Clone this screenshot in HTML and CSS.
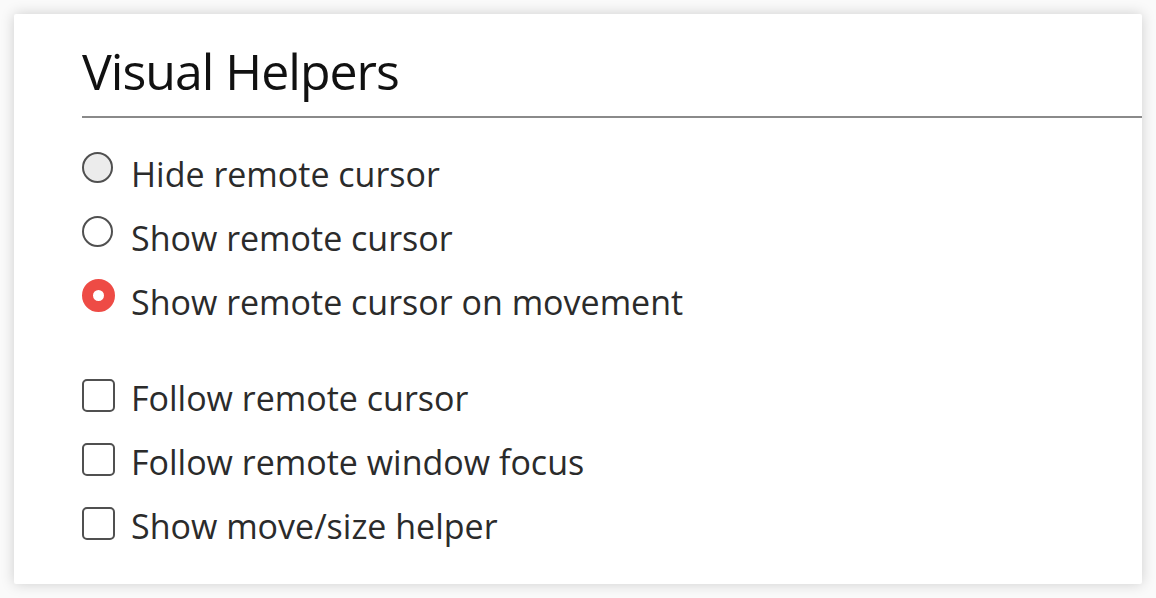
FILE: index.html
```html
<!DOCTYPE html>
<html lang="en">
<head>
  <meta charset="UTF-8">
  <meta name="viewport" content="width=device-width, initial-scale=1.0">
  <title>Visual Helpers</title>
  <link rel="stylesheet" href="styles.css">
</head>
<body>
  <div class="panel">
    <h2 class="panel-title">Visual Helpers</h2>

    <div class="option-group">
      <label class="option">
        <input type="radio" name="cursor" class="radio hover">
        <span>Hide remote cursor</span>
      </label>
      <label class="option">
        <input type="radio" name="cursor" class="radio">
        <span>Show remote cursor</span>
      </label>
      <label class="option">
        <input type="radio" name="cursor" class="radio" checked>
        <span>Show remote cursor on movement</span>
      </label>
    </div>

    <div class="option-group">
      <label class="option">
        <input type="checkbox" class="check">
        <span>Follow remote cursor</span>
      </label>
      <label class="option">
        <input type="checkbox" class="check">
        <span>Follow remote window focus</span>
      </label>
      <label class="option">
        <input type="checkbox" class="check">
        <span>Show move/size helper</span>
      </label>
    </div>
  </div>
</body>
</html>
```

FILE: styles.css
```css
body {
  margin: 0;
  background: #fafafa;
  font-family: "Open Sans", "Noto Sans", sans-serif;
}

.panel {
  margin: 14px;
  width: 1060px;
  height: 546px;
  padding: 24px 0 0 68px;
  background: #fff;
  border-radius: 2px;
  box-shadow: 0 0 14px rgba(0, 0, 0, 0.18);
}

.panel-title {
  margin: 0;
  padding: 1px 0 13px;
  font-size: 50px;
  font-weight: normal;
  letter-spacing: -1px;
  line-height: 64px;
  color: #111;
  border-bottom: 2px solid #8a8a8a;
}

.option-group {
  display: flex;
  flex-direction: column;
}

.option-group:first-of-type {
  margin-top: 24px;
}

.option-group + .option-group {
  margin-top: 32px;
}

.option {
  display: flex;
  align-items: center;
  height: 64px;
  font-size: 34px;
  color: #2b2b2b;
}

.radio,
.check {
  appearance: none;
  margin: 0 18px 13px 0;
  background: #fff;
  border: 2px solid #505050;
}

.radio {
  width: 31px;
  height: 31px;
  border-radius: 50%;
}

.radio.hover {
  background: #ececec;
}

.radio:checked {
  width: 33px;
  height: 33px;
  margin-right: 16px;
  border: 11px solid #ee4b45;
}

.check {
  width: 33px;
  height: 33px;
  margin: 0 16px 6px 0;
  border-radius: 5px;
}
```
